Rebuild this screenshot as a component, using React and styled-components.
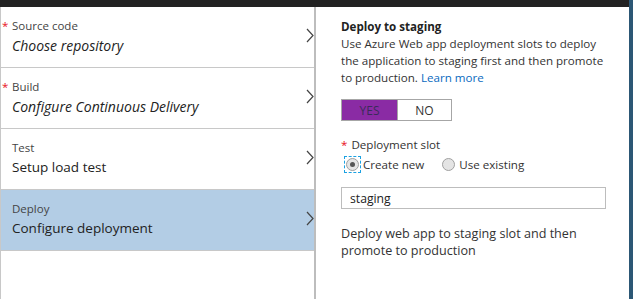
import React from "react";
import styled, { createGlobalStyle } from "styled-components";

const GlobalStyle = createGlobalStyle`
    body {
        margin: 0;
        overflow: hidden;
        font-family: "Open Sans", "Noto Sans", sans-serif;
    }
`
const Frame = styled.div`
    width: 633px;
    height: 299px;
    display: flex;
    background: #fff;
`
const Main = styled.div`
    flex: 1;
    display: flex;
    flex-direction: column;
`
const TopBar = styled.div`
    height: 7px;
    background: #222;
`
const EdgeStrip = styled.div`
    width: 4px;
    background: #2c5775;
`
const Content = styled.div`
    flex: 1;
    display: flex;
`
const StepList = styled.div`
    width: 313px;
    border-left: 1px solid #c8c8c8;
    border-right: 2px solid #bdbdbd;
`
const Step = styled.div`
    height: 60px;
    border-bottom: 1px solid #c8c8c8;
    background: ${props => props.selected ? "#b3cde5" : "#fff"};
    display: flex;
    align-items: center;
    padding: 0 0 0 1px;
`
const StepText = styled.div`
    flex: 1;
    display: flex;
    flex-direction: column;
    gap: 2px;
    margin-bottom: 2px;
`
const StepLabel = styled.div`
    font-size: 11.5px;
    color: #444;
    line-height: 16px;
    display: flex;
    span {
        width: 10px;
        color: #e81123;
    }
`
const StepValue = styled.div`
    font-size: ${props => props.italic ? "14px" : "13.5px"};
    color: #222;
    padding-left: 10px;
    line-height: 19px;
    font-style: ${props => props.italic ? "italic" : "normal"};
`
const Chevron = styled.svg`
    width: 8px;
    height: 15px;
    margin-bottom: 4px;
`
const Detail = styled.div`
    flex: 1;
    padding: 11px 0 0 25px;
    color: #333;
    font-size: 11.6px;
    line-height: 17px;
`
const Title = styled.div`
    font-weight: 700;
    color: #222;
`
const Description = styled.p`
    margin: 0;
    width: 265px;
`
const Link = styled.a`
    color: #0a6ac0;
    text-decoration: none;
`
const Toggle = styled.div`
    display: flex;
    width: 109px;
    height: 20px;
    margin-top: 13px;
    border: 1px solid #a6a6a6;
`
const ToggleOption = styled.div`
    flex: ${props => props.active ? "0 0 55px" : "1"};
    background: ${props => props.active ? "#8a2ba4" : "#fff"};
    border-right: ${props => props.active ? "1px solid #a6a6a6" : "none"};
    color: ${props => props.active ? "#3b2b5a" : "#333"};
    display: flex;
    align-items: center;
    justify-content: center;
    font-size: 12px;
`
const FieldLabel = styled.div`
    margin-top: 15px;
    span {
        color: #e81123;
        margin-right: 4px;
    }
`
const RadioRow = styled.div`
    display: flex;
    align-items: center;
    gap: 17px;
    margin-top: 3px;
    margin-left: 4px;
`
const RadioOption = styled.label`
    display: flex;
    align-items: center;
    gap: 3px;
`
const RadioBox = styled.span`
    display: flex;
    padding: 1px;
    outline: ${props => props.focused ? "1px dashed #1ba1e2" : "none"};
`
const RadioDot = styled.span`
    width: 11px;
    height: 11px;
    border-radius: 50%;
    border: 1px solid #a0a0a0;
    background: #e4e4e4;
    display: flex;
    align-items: center;
    justify-content: center;
    &::after {
        content: "";
        width: 5px;
        height: 5px;
        border-radius: 50%;
        background: ${props => props.checked ? "#555" : "transparent"};
    }
`
const TextInput = styled.div`
    width: 255px;
    height: 20px;
    margin-top: 14px;
    border: 1px solid #bdbdbd;
    padding-left: 8px;
    display: flex;
    align-items: center;
    color: #222;
    font-size: 12.2px;
`
const Note = styled.p`
    margin: 16px 0 0;
    width: 260px;
    font-size: 12.6px;
`

function ChevronIcon() {
    return (
        <Chevron viewBox="0 0 8 15">
            <polyline points="1,1 7,7.5 1,14" fill="none" stroke="#444" strokeWidth="1.2" />
        </Chevron>
    );
}

const steps = [
    { label: "Source code", value: "Choose repository", required: true, italic: true },
    { label: "Build", value: "Configure Continuous Delivery", required: true, italic: true },
    { label: "Test", value: "Setup load test" },
    { label: "Deploy", value: "Configure deployment", selected: true },
];

function App() {
    return (
        <Frame>
            <GlobalStyle />
            <Main>
                <TopBar />
                <Content>
                    <StepList>
                        {steps.map(step => (
                            <Step key={step.label} selected={step.selected}>
                                <StepText>
                                    <StepLabel>
                                        <span>{step.required ? "*" : ""}</span>
                                        {step.label}
                                    </StepLabel>
                                    <StepValue italic={step.italic}>{step.value}</StepValue>
                                </StepText>
                                <ChevronIcon />
                            </Step>
                        ))}
                    </StepList>
                    <Detail>
                        <Title>Deploy to staging</Title>
                        <Description>
                            Use Azure Web app deployment slots to deploy the application to staging first and then promote to production. <Link>Learn more</Link>
                        </Description>
                        <Toggle>
                            <ToggleOption active>YES</ToggleOption>
                            <ToggleOption>NO</ToggleOption>
                        </Toggle>
                        <FieldLabel><span>*</span>Deployment slot</FieldLabel>
                        <RadioRow>
                            <RadioOption>
                                <RadioBox focused><RadioDot checked /></RadioBox>
                                Create new
                            </RadioOption>
                            <RadioOption>
                                <RadioBox><RadioDot /></RadioBox>
                                Use existing
                            </RadioOption>
                        </RadioRow>
                        <TextInput>staging</TextInput>
                        <Note>Deploy web app to staging slot and then promote to production</Note>
                    </Detail>
                </Content>
            </Main>
            <EdgeStrip />
        </Frame>
    );
}

export default App;
